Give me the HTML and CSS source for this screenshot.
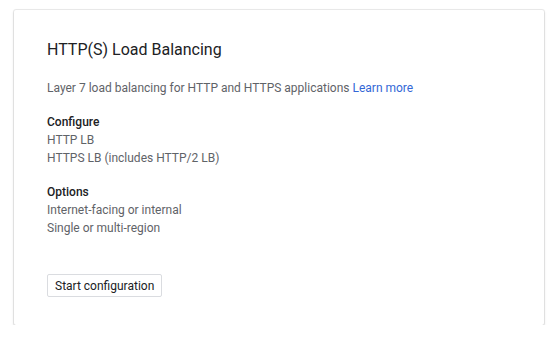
FILE: index.html
```html
<!DOCTYPE html>
<html lang="en">
<head>
    <meta charset="UTF-8">
    <meta name="viewport" content="width=device-width, initial-scale=1.0">
    <title>HTTP(S) Load Balancing</title>
    <link rel="stylesheet" href="styles.css">
</head>
<body>
    <div class="card">
        <h1>HTTP(S) Load Balancing</h1>
        <p class="desc">Layer 7 load balancing for HTTP and HTTPS applications <a href="#">Learn more</a></p>
        <div class="section">
            <h2>Configure</h2>
            <div>HTTP LB</div>
            <div>HTTPS LB (includes HTTP/2 LB)</div>
        </div>
        <div class="section">
            <h2>Options</h2>
            <div>Internet-facing or internal</div>
            <div>Single or multi-region</div>
        </div>
        <button>Start configuration</button>
    </div>
</body>
</html>
```

FILE: styles.css
```css
body, html {
    margin: 0;
    padding: 0;
    font-family: Roboto, "Liberation Sans", sans-serif;
    background-color: #fff;
}
.card {
    margin: 10px 0 0 14px;
    width: 530px;
    height: 315px;
    box-sizing: border-box;
    padding: 28px 33px 0 33px;
    background-color: #fff;
    box-shadow: 0 0 0 1px rgba(0, 0, 0, 0.07), 0 1px 3px rgba(0, 0, 0, 0.16);
    border-radius: 2px;
    font-size: 12px;
    line-height: 18px;
    color: #5f6368;
}
h1 {
    margin: 0;
    font-size: 16px;
    line-height: 24px;
    font-weight: 400;
    color: #202124;
}
.desc {
    margin: 17px 0 0 0;
}
.desc a {
    color: #3367d6;
    text-decoration: none;
}
.section {
    margin-top: 16px;
}
h2 {
    margin: 0;
    font-size: 12px;
    line-height: 18px;
    font-weight: 500;
    color: #202124;
}
button {
    display: block;
    margin-top: 37px;
    height: 23px;
    padding: 0 7px;
    font-family: inherit;
    font-size: 12px;
    color: #202124;
    background-color: #fff;
    border: 1px solid #dadce0;
    border-radius: 2px;
}
```
